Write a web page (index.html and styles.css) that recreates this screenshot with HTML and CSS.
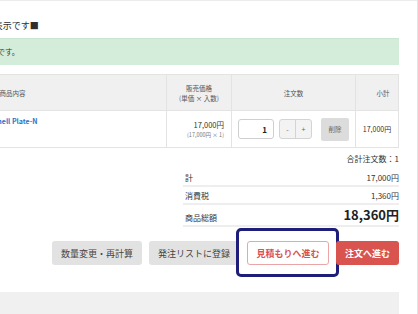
FILE: index.html
```html
<!DOCTYPE html>
<html lang="ja">
<head>
<meta charset="utf-8">
<link rel="stylesheet" href="styles.css">
</head>
<body>
<div class="frame">
  <div class="page">
    <p class="notice">■テスト用のお知らせ表示です■</p>
    <div class="alert">ご注文の商品はカートに保存済みです。</div>

    <div class="cart">
      <div class="th">商品内容</div>
      <div class="th"><span>販売価格</span><span>(単価 × 入数)</span></div>
      <div class="th">注文数</div>
      <div class="th th-sub">小計</div>

      <div class="td td-name"><a class="pname">Shell Plate-N</a></div>
      <div class="td td-price"><span class="price">17,000円</span><span class="unit">(17,000円 × 1)</span></div>
      <div class="td td-qty">
        <input class="qty" type="text" value="1">
        <div class="stepper"><span>-</span><span>+</span></div>
        <button class="del">削除</button>
      </div>
      <div class="td td-sub">17,000円</div>
    </div>

    <div class="totalqty">合計注文数：1</div>

    <div class="summary">
      <div class="srow"><span>計</span><span>17,000円</span></div>
      <div class="srow"><span>消費税</span><span>1,360円</span></div>
      <div class="srow srow-total"><span class="glabel">商品総額</span><span class="grand">18,360円</span></div>
    </div>

    <div class="actions">
      <button class="btn btn-gray">数量変更・再計算</button>
      <button class="btn btn-gray">発注リストに登録</button>
      <button class="btn btn-outline">見積もりへ進む<span class="mark"></span></button>
      <button class="btn btn-red">注文へ進む</button>
    </div>

    <div class="footer"></div>
  </div>
</div>
</body>
</html>
```
FILE: styles.css
```css
html, body {
  margin: 0;
  padding: 0;
  background: #fff;
  overflow: hidden;
}
body {
  font-family: "Noto Sans CJK JP", sans-serif;
  color: #333;
}
.frame {
  width: 417px;
  height: 313px;
  border-top: 1px solid #ececec;
  border-right: 1px solid #e4e4e4;
  overflow: hidden;
}
.page {
  margin-left: -142px;
  width: 541px;
}
.notice {
  margin: 0;
  padding: 18px 0 0 46px;
  height: 14px;
  font-size: 9px;
  line-height: 14px;
  color: #2e2e2e;
}
.alert {
  margin-top: 5px;
  height: 11px;
  background: #d4edda;
  border-top: 1px solid #c9e7d0;
  padding: 7px 0 8px 27px;
  font-size: 7.5px;
  line-height: 11px;
  color: #3a3a3a;
}
.cart {
  margin-top: 9px;
  display: grid;
  grid-template-columns: 308px 65px 124px 43px;
  border-top: 1px solid #e3e3e3;
  border-right: 1px solid #e3e3e3;
}
.th, .td {
  box-sizing: border-box;
  border-left: 1px solid #e3e3e3;
  border-bottom: 1px solid #e3e3e3;
}
.th {
  height: 36px;
  background: #f0f0f0;
  display: flex;
  flex-direction: column;
  align-items: center;
  justify-content: center;
  font-size: 6.5px;
  line-height: 10px;
  color: #555;
}
.th-sub {
  padding-left: 12px;
}
.td {
  height: 37px;
  font-size: 7px;
}
.td-name {
  padding: 5px 0 0 134px;
  line-height: 10px;
}
.pname {
  color: #2a74c9;
  font-weight: 700;
}
.td-price {
  display: flex;
  flex-direction: column;
  align-items: flex-end;
  justify-content: center;
  padding-right: 7px;
}
.price {
  font-size: 7.5px;
  line-height: 11px;
  color: #333;
}
.unit {
  font-size: 5.5px;
  line-height: 10px;
  color: #777;
}
.td-qty {
  display: flex;
  align-items: center;
  justify-content: center;
  gap: 5px;
}
.qty {
  width: 36px;
  height: 20px;
  box-sizing: border-box;
  border: 1px solid #cfcfcf;
  border-radius: 3px;
  padding: 0 6px 0 0;
  text-align: right;
  font-family: inherit;
  font-size: 8px;
  font-weight: 700;
  color: #222;
  outline: none;
}
.stepper {
  display: flex;
  height: 20px;
  box-sizing: border-box;
  border: 1px solid #d4d4d4;
  border-radius: 3px;
  background: #f3f3f3;
  margin-right: 4px;
}
.stepper span {
  width: 15px;
  display: flex;
  align-items: center;
  justify-content: center;
  font-size: 7px;
  color: #666;
}
.stepper span + span {
  border-left: 1px solid #d4d4d4;
}
.del {
  width: 28px;
  height: 23px;
  border: none;
  border-radius: 2px;
  background: #dcdcdc;
  font-family: inherit;
  font-size: 6.5px;
  color: #666;
  padding: 0;
}
.td-sub {
  display: flex;
  align-items: center;
  justify-content: center;
  font-size: 7px;
}
.totalqty {
  margin-top: 5px;
  height: 12px;
  text-align: right;
  font-size: 8px;
  line-height: 12px;
}
.summary {
  margin: 4px 0 0 325px;
  font-size: 8px;
}
.srow {
  display: flex;
  justify-content: space-between;
  height: 12px;
  padding: 3px 0 1px 2px;
  line-height: 12px;
  border-bottom: 2px solid #eeeeee;
}
.srow-total {
  height: 20px;
  padding: 0 0 0 2px;
  align-items: center;
  line-height: 18px;
}
.glabel {
  padding-top: 5px;
}
.grand {
  font-size: 13px;
  font-weight: 700;
  color: #222;
}
.actions {
  margin-top: 14px;
  height: 24px;
  display: flex;
  justify-content: flex-end;
  gap: 7px;
}
.btn {
  position: relative;
  height: 24px;
  box-sizing: border-box;
  padding: 0;
  border: none;
  border-radius: 3px;
  font-family: inherit;
  font-size: 9px;
  display: flex;
  align-items: center;
  justify-content: center;
}
.btn-gray {
  width: 90px;
  background: #e2e2e2;
  color: #444;
}
.btn-outline {
  width: 82px;
  margin-left: 1px;
  background: #fff;
  border: 1px solid #eba5a5;
  color: #d9534f;
  font-weight: 700;
}
.btn-red {
  width: 63px;
  background: #d9534f;
  color: #fff;
  font-weight: 700;
}
.mark {
  position: absolute;
  left: -12px;
  right: -11px;
  top: -14px;
  bottom: -13px;
  border: 3px solid #1e1e7a;
  border-radius: 5px;
}
.footer {
  margin-top: 27px;
  height: 30px;
  background: #f0f0f0;
}
```
